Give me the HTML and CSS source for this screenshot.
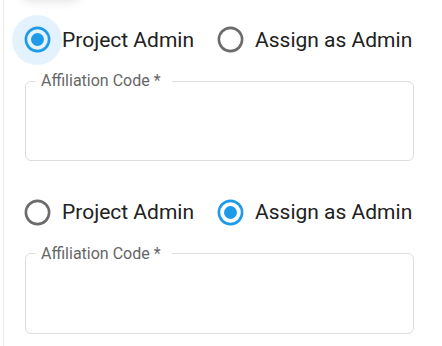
FILE: index.html
```html
<!DOCTYPE html>
<html lang="en">
<head>
    <meta charset="UTF-8">
    <meta name="viewport" content="width=device-width, initial-scale=1.0">
    <title>Admin Assignment</title>
    <link rel="stylesheet" href="styles.css">
</head>
<body>
    <div class="top-shadow"></div>
    <div class="panel">
        <div class="admin-group">
            <div class="radio-row">
                <label class="radio-option">
                    <span class="radio-box ripple">
                        <svg class="radio-icon checked" viewBox="0 0 24 24">
                            <circle cx="12" cy="12" r="9" fill="none" stroke="currentColor" stroke-width="2"/>
                            <circle cx="12" cy="12" r="5" fill="currentColor"/>
                        </svg>
                    </span>
                    <span class="radio-label">Project Admin</span>
                </label>
                <label class="radio-option">
                    <span class="radio-box">
                        <svg class="radio-icon" viewBox="0 0 24 24">
                            <circle cx="12" cy="12" r="9" fill="none" stroke="currentColor" stroke-width="2"/>
                        </svg>
                    </span>
                    <span class="radio-label">Assign as Admin</span>
                </label>
            </div>
            <fieldset class="field">
                <legend>Affiliation Code *</legend>
            </fieldset>
        </div>

        <div class="admin-group">
            <div class="radio-row">
                <label class="radio-option">
                    <span class="radio-box">
                        <svg class="radio-icon" viewBox="0 0 24 24">
                            <circle cx="12" cy="12" r="9" fill="none" stroke="currentColor" stroke-width="2"/>
                        </svg>
                    </span>
                    <span class="radio-label">Project Admin</span>
                </label>
                <label class="radio-option">
                    <span class="radio-box">
                        <svg class="radio-icon checked" viewBox="0 0 24 24">
                            <circle cx="12" cy="12" r="9" fill="none" stroke="currentColor" stroke-width="2"/>
                            <circle cx="12" cy="12" r="5" fill="currentColor"/>
                        </svg>
                    </span>
                    <span class="radio-label">Assign as Admin</span>
                </label>
            </div>
            <fieldset class="field">
                <legend>Affiliation Code *</legend>
            </fieldset>
        </div>
    </div>
</body>
</html>
```

FILE: styles.css
```css
* {
    margin: 0;
    padding: 0;
    box-sizing: border-box;
}

body, html {
    height: 100%;
    font-family: Roboto, "Liberation Sans", sans-serif;
    background: #ffffff;
    overflow: hidden;
}

/* shadow of the menu sitting just above the visible area */
.top-shadow {
    position: absolute;
    top: -22px;
    left: 20px;
    width: 62px;
    height: 22px;
    background: #ffffff;
    box-shadow: 0 2px 10px rgba(0, 0, 0, 0.1);
    border-radius: 10px;
}

.panel {
    margin-left: 3px;
    height: 100%;
    border-left: 1px solid #ececec;
    padding: 14.5px 0 0 8px;
}

.admin-group {
    margin-bottom: 26px;
}

.radio-row {
    display: flex;
    align-items: center;
}

.radio-option {
    display: flex;
    align-items: center;
    margin-right: 11px;
    cursor: pointer;
}

.radio-box {
    width: 50px;
    height: 50px;
    border-radius: 50%;
    display: flex;
    align-items: center;
    justify-content: center;
}

.ripple {
    background-color: rgba(33, 150, 243, 0.12);
}

.radio-icon {
    width: 31px;
    height: 31px;
    color: #6b6b6b;
}

.radio-icon.checked {
    color: #1d9be9;
}

.radio-label {
    font-size: 21px;
    color: #212121;
}

.field {
    margin: 8.5px 0 0 13px;
    width: 389px;
    height: 88px;
    border: 1.5px solid #dddddd;
    border-radius: 6px;
    padding: 0 0 0 9px;
}

.field legend {
    font-size: 16px;
    line-height: 16px;
    color: #666666;
    padding: 0 11px 0 6px;
}
```
